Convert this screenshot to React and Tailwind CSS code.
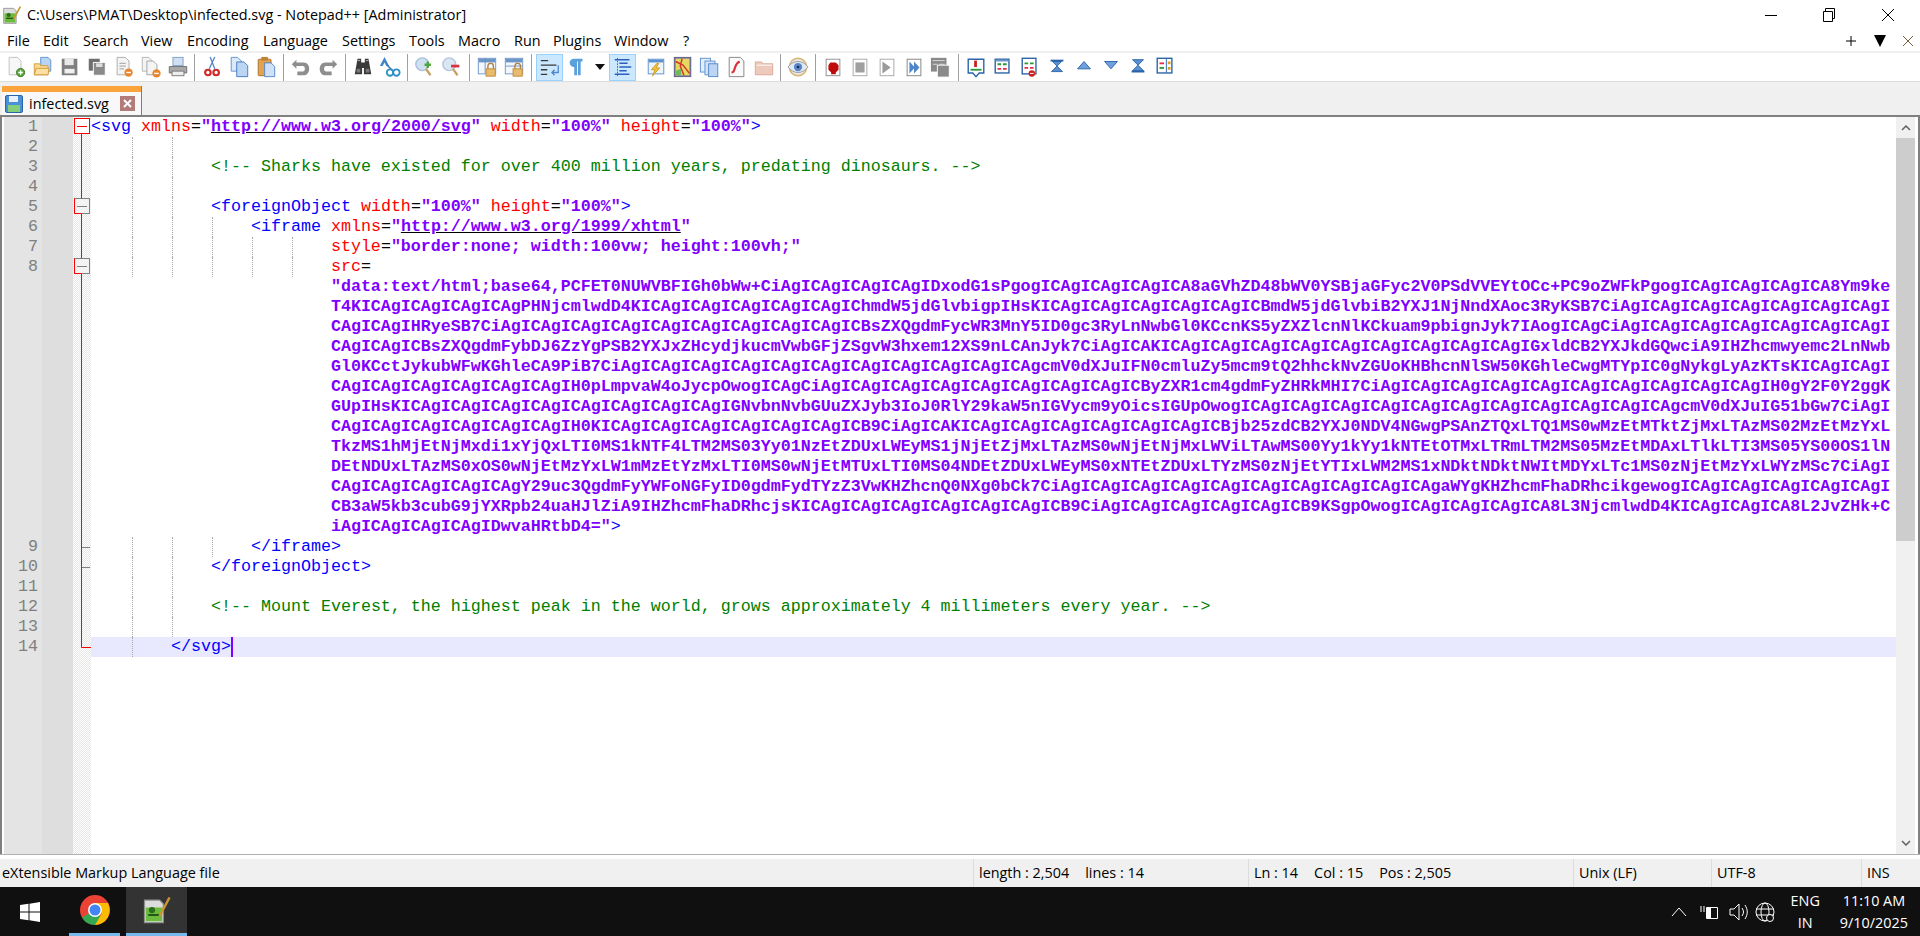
import React from "react";

const menus = [
  ["File", "w-[36px]"], ["Edit", "w-[40px]"], ["Search", "w-[58px]"], ["View", "w-[46px]"],
  ["Encoding", "w-[76px]"], ["Language", "w-[79px]"], ["Settings", "w-[67px]"], ["Tools", "w-[49px]"],
  ["Macro", "w-[56px]"], ["Run", "w-[39px]"], ["Plugins", "w-[61px]"], ["Window", "w-[69px]"], ["?", "w-[20px]"],
];

const b64 = [
  "T4KICAgICAgICAgICAgPHNjcmlwdD4KICAgICAgICAgICAgICAgIChmdW5jdGlvbigpIHsKICAgICAgICAgICAgICAgICBmdW5jdGlvbiB2YXJ1NjNndXAoc3RyKSB7CiAgICAgICAgICAgICAgICAgICAgI",
  "CAgICAgIHRyeSB7CiAgICAgICAgICAgICAgICAgICAgICAgICAgICBsZXQgdmFycWR3MnY5ID0gc3RyLnNwbGl0KCcnKS5yZXZlcnNlKCkuam9pbignJyk7IAogICAgCiAgICAgICAgICAgICAgICAgICAgI",
  "CAgICAgICBsZXQgdmFybDJ6ZzYgPSB2YXJxZHcydjkucmVwbGFjZSgvW3hxem12XS9nLCAnJyk7CiAgICAK" + "ICAg".repeat(9) + "IGxldCB2YXJkdGQwciA9IHZhcmwyemc2LnNwb",
  "Gl0KCctJykubWFwKGhleCA9PiB7CiAgICAgICAgICAgICAgICAgICAgICAgICAgICAgICAgcmV0dXJuIFN0cmluZy5mcm9tQ2hhckNvZGUoKHBhcnNlSW50KGhleCwgMTYpIC0gNykgLyAzKTsKICAgICAgI",
  "CAgICAgICAgICAgICAgICAgIH0pLmpvaW4oJycpOwogICAgCiAgICAgICAgICAgICAgICAgICAgICAgICByZXR1cm4gdmFyZHRkMHI7CiAgICAgICAgICAgICAgICAgICAgICAgICAgICAgIH0gY2F0Y2ggK",
  "GUpIHsKICAgICAgICAgICAgICAgICAgICAgICAgIGNvbnNvbGUuZXJyb3IoJ0RlY29kaW5nIGVycm9yOicsIGUpOwogICAgICAgICAgICAgICAgICAgICAgICAgICAgICAgICAgcmV0dXJuIG51bGw7CiAgI",
  "CAgICAgICAgICAgICAgICAgIH0KICAgICAgICAgICAgICAgICAgICB9CiAgICAKICAgICAgICAgICAgICAgICAgICBjb25zdCB2YXJ0NDV4NGwgPSAnZTQxLTQ1MS0wMzEtMTktZjMxLTAzMS02MzEtMzYxL",
  "TkzMS1hMjEtNjMxdi1xYjQxLTI0MS1kNTF4LTM2MS03Yy01NzEtZDUxLWEyMS1jNjEtZjMxLTAzMS0wNjEtNjMxLWViLTAwMS00Yy1kYy1kNTEtOTMxLTRmLTM2MS05MzEtMDAxLTlkLTI3MS05YS00OS1lN",
  "DEtNDUxLTAzMS0xOS0wNjEtMzYxLW1mMzEtYzMxLTI0MS0wNjEtMTUxLTI0MS04NDEtZDUxLWEyMS0xNTEtZDUxLTYzMS0zNjEtYTIxLWM2MS1xNDktNDktNWItMDYxLTc1MS0zNjEtMzYxLWYzMSc7CiAgI",
  "CAgICAgICAgICAgICAgY29uc3QgdmFyYWFoNGFyID0gdmFydTYzZ3VwKHZhcnQ0NXg0bCk7CiAgICAgICAgICAgICAgICAgICAgICAgICAgICAgaWYgKHZhcmFhaDRhcikgewogICAgICAgICAgICAgICAgI",
  "CB3aW5kb3cubG9jYXRpb24uaHJlZiA9IHZhcmFhaDRhcjsK" + "ICAg".repeat(6) + "ICB9Ci" + "AgIC".repeat(5) + "B9KSgpOwog" + "ICAg".repeat(3) + "ICA8L3NjcmlwdD4K" + "ICAg".repeat(2) + "ICA8L2JvZHk+C",
];

const T = ({ c }) => <span className="text-[#0000ff]">{c}</span>;
const A = ({ c }) => <span className="text-[#ff0000]">{c}</span>;
const S = ({ c }) => <span className="font-bold text-[#8000ff]">{c}</span>;
const U = ({ c }) => <span className="font-bold text-[#8000ff] underline decoration-black">{c}</span>;
const C = ({ c }) => <span className="text-[#008000]">{c}</span>;

const pad = (n) => " ".repeat(n);

const rows = [
  { n: 1, g: [], t: <><T c="<svg " /><A c="xmlns" />=<S c={'"'} /><U c="http://www.w3.org/2000/svg" /><S c={'"'} /> <A c="width" />=<S c={'"100%"'} /> <A c="height" />=<S c={'"100%"'} /><T c=">" /></> },
  { n: 2, g: [41, 81], t: "" },
  { n: 3, g: [41, 81], t: <>{pad(12)}<C c="<!-- Sharks have existed for over 400 million years, predating dinosaurs. -->" /></> },
  { n: 4, g: [41, 81], t: "" },
  { n: 5, g: [41, 81], t: <>{pad(12)}<T c="<foreignObject " /><A c="width" />=<S c={'"100%"'} /> <A c="height" />=<S c={'"100%"'} /><T c=">" /></> },
  { n: 6, g: [41, 81, 121], t: <>{pad(16)}<T c="<iframe " /><A c="xmlns" />=<S c={'"'} /><U c="http://www.w3.org/1999/xhtml" /><S c={'"'} /></> },
  { n: 7, g: [41, 81, 121, 161, 201], t: <>{pad(24)}<A c="style" />=<S c={'"border:none; width:100vw; height:100vh;"'} /></> },
  { n: 8, g: [41, 81, 121, 161, 201], t: <>{pad(24)}<A c="src" />=</> },
  { g: [], t: <>{pad(24)}<S c={'"data:text/html;base64,PCFET0NUWVBFIGh0bWw+CiAgICAgICAgICAgIDxodG1sPgogICAgICAgICAgICA8aGVhZD48bWV0YSBjaGFyc2V0PSdVVEYtOCc+PC9oZWFkPgogICAgICAgICAgICA8Ym9ke'} /></> },
  ...b64.map((s) => ({ g: [], t: <>{pad(24)}<S c={s} /></> })),
  { g: [], t: <>{pad(24)}<S c={'iAgICAgICAgICAgIDwvaHRtbD4="'} /><T c=">" /></> },
  { n: 9, g: [41, 81, 121], t: <>{pad(16)}<T c="</iframe>" /></> },
  { n: 10, g: [41, 81], t: <>{pad(12)}<T c="</foreignObject>" /></> },
  { n: 11, g: [41, 81], t: "" },
  { n: 12, g: [41, 81], t: <>{pad(12)}<C c="<!-- Mount Everest, the highest peak in the world, grows approximately 4 millimeters every year. -->" /></> },
  { n: 13, g: [41, 81], t: "" },
  { n: 14, g: [41], t: <>{pad(8)}<T c="</svg>" /></>, active: true },
];

/* toolbar drawings */
const Ico = ({ children }) => (
  <svg width="22" height="22" viewBox="0 0 24 24" className="block">{children}</svg>
);
const Page = ({ x = 5, y = 2, w = 12, h = 17, f = "#fff", s = "#9a9a9a" }) => (
  <path d={`M${x}.5 ${y}.5h${w - 4}l4 4v${h - 4}h-${w}z`} fill={f} stroke={s} />
);
const Win = ({ c = "#5b8fd0" }) => (
  <>
    <rect x="3.5" y="3.5" width="17" height="16" fill="#eef4fb" stroke={c} />
    <rect x="4" y="4" width="16" height="3" fill={c} />
  </>
);

const icons = {
  newf: <Ico><Page x={4} y={1} w={13} h={19} f="#f7f7f7" s="#c0c0c0" /><circle cx="17" cy="18" r="4.5" fill="#5aa63a" stroke="#3b7d25" /><path d="M17 15.5v5M14.5 18h5" stroke="#fff" strokeWidth="1.5" /></Ico>,
  open: <Ico><path d="M9.5 1.5h8l3 3v12h-11z" fill="#b9d3f3" stroke="#5b8fd0" /><path d="M2.5 8.5h6l1 2h8v10h-15z" fill="#fbd98c" stroke="#cf9b3c" /><path d="M2.5 20.5l2-7h14l-1 7z" fill="#fce0a0" stroke="#cf9b3c" /></Ico>,
  save: <Ico><rect x="3" y="3" width="17" height="18" fill="#7f7f7f" /><rect x="6" y="3" width="10" height="7" fill="#e8e8e8" /><rect x="6" y="14" width="11" height="5" fill="#f0f0f0" /></Ico>,
  saveall: <Ico><rect x="3" y="3" width="12" height="13" fill="#6f6f6f" /><rect x="8" y="7" width="13" height="14" fill="#8a8a8a" stroke="#fff" /><rect x="11" y="8" width="7" height="4" fill="#ddd" /></Ico>,
  close: <Ico><Page x={4} y={1} w={13} h={19} f="#f4f4f4" s="#a8a8a8" /><path d="M7 8h7M7 11h7M7 14h5" stroke="#9a9a9a" /><circle cx="17" cy="18" r="4.5" fill="#e8862d" /><path d="M14.5 18h5" stroke="#fff" strokeWidth="1.5" /></Ico>,
  closeall: <Ico><Page x={2} y={1} w={11} h={15} f="#f4f4f4" s="#b0b0b0" /><Page x={7} y={5} w={11} h={15} f="#f4f4f4" s="#a0a0a0" /><circle cx="18" cy="19" r="4.5" fill="#e8862d" /><path d="M15.5 19h5" stroke="#fff" strokeWidth="1.5" /></Ico>,
  print: <Ico><rect x="6.5" y="1.5" width="11" height="9" fill="#cfe0f5" stroke="#7c9cc6" /><path d="M2.5 11.5h19v7h-19z" fill="#a9a9a9" stroke="#6f6f6f" /><rect x="5.5" y="16.5" width="13" height="5" fill="#eee" stroke="#777" /></Ico>,
  cut: <Ico><path d="M9 14L15 1M15 14L10 1" stroke="#4f86c9" strokeWidth="1.4" /><circle cx="7.5" cy="18" r="3" fill="none" stroke="#d02a2a" strokeWidth="2.4" /><circle cx="16.5" cy="18" r="3" fill="none" stroke="#d02a2a" strokeWidth="2.4" /></Ico>,
  copy: <Ico><Page x={3} y={1} w={11} h={15} f="#dce9f9" s="#5b8fd0" /><Page x={9} y={6} w={12} h={16} f="#bcd5f3" s="#3f78c4" /></Ico>,
  paste: <Ico><rect x="3.5" y="3.5" width="14" height="18" rx="1" fill="#e3a24f" stroke="#a86f25" /><rect x="7" y="1" width="7" height="4" fill="#bd8236" /><Page x={10} y={7} w={11} h={15} f="#cfe0f7" s="#4f86c9" /></Ico>,
  undo: <Ico><path d="M7 4L2 9l5 5v-3h7c3 0 3 6 0 6H8v4h7c8 0 8-14 0-14H7z" fill="#8e8e8e" /></Ico>,
  redo: <Ico><path d="M17 4l5 5-5 5v-3h-7c-3 0-3 6 0 6h6v4H9c-8 0-8-14 0-14h8z" fill="#8e8e8e" /></Ico>,
  find: <Ico><path d="M6 3h4v4h4V3h4l3 17h-8v-7h-2v7H3z" fill="#3a3a3a" /><path d="M6 5h3M15 5h3" stroke="#bbb" /><rect x="5" y="14" width="4" height="4" fill="#777" /><rect x="15" y="14" width="4" height="4" fill="#777" /></Ico>,
  replace: <Ico><path d="M6 1L1 11h3l2-4 2 4h3z" fill="#3f86c9" /><path d="M9 10l6 6" stroke="#3a6ea8" strokeWidth="1.5" /><circle cx="12" cy="18" r="3.5" fill="none" stroke="#2d8fc4" strokeWidth="2" /><circle cx="19" cy="18" r="3.5" fill="none" stroke="#2d8fc4" strokeWidth="2" /></Ico>,
  zoomin: <Ico><circle cx="9" cy="9" r="7" fill="#cfe0f3" stroke="#a9c0dc" strokeWidth="1.5" /><path d="M13 14l5 7" stroke="#c9a060" strokeWidth="2.5" /><path d="M15 6v7M11.500 9.500h7" stroke="#4ea63e" strokeWidth="2.600" /></Ico>,
  zoomout: <Ico><circle cx="9" cy="9" r="7" fill="#dbe6f3" stroke="#b2c5dc" strokeWidth="1.5" /><path d="M13 14l5 7" stroke="#c9a060" strokeWidth="2.5" /><path d="M11 11h9" stroke="#d8343b" strokeWidth="3" /></Ico>,
  syncv: <Ico><rect x="2.5" y="2.5" width="19" height="17" fill="#f3f6fb" stroke="#6c95c8" /><rect x="3" y="3" width="18" height="4" fill="#6c95c8" /><path d="M10 2v17" stroke="#6c95c8" /><rect x="11" y="14" width="10" height="8" fill="#e9bb6d" stroke="#c08a35" /><path d="M13 14v-3a3 3 0 016 0v3" fill="none" stroke="#b08040" strokeWidth="1.5" /></Ico>,
  synch: <Ico><rect x="2.5" y="2.5" width="19" height="17" fill="#f3f6fb" stroke="#6c95c8" /><rect x="3" y="3" width="18" height="4" fill="#6c95c8" /><path d="M3 11h18" stroke="#6c95c8" /><rect x="11" y="14" width="10" height="8" fill="#e9bb6d" stroke="#c08a35" /><path d="M13 14v-3a3 3 0 016 0v3" fill="none" stroke="#b08040" strokeWidth="1.5" /></Ico>,
  wrap: <Ico><path d="M2 5h8M2 10h17M2 15h7M2 20h7" stroke="#3a3a3a" strokeWidth="1.4" /><path d="M21 10v8h-6M17 15l-3 3 3 3" fill="none" stroke="#4f86c9" strokeWidth="1.4" /></Ico>,
  pilcrow: <Ico><path d="M8 3h10v3h-2v15h-3V6h-1v15H9v-9a4.500 4.500 0 01-1-9z" fill="#5aa0dc" /></Ico>,
  drop: <svg width="12" height="24" viewBox="0 0 12 24" className="block"><path d="M1 9h10l-5 6z" fill="#111" /></svg>,
  indent: <Ico><path d="M6 2v20" stroke="#e03030" strokeDasharray="2 1" /><path d="M3 4h16M8 8h9M8 12h13M8 16h8M3 20h16" stroke="#2a5fc0" strokeWidth="1.6" /></Ico>,
  flash: <Ico><Win /><path d="M13 8l-6 7h4l-3 7 8-9h-4l3-5z" fill="#f2c23c" stroke="#d19a1c" /></Ico>,
  map: <Ico><rect x="2.500" y="1.500" width="18" height="21" fill="#7f7fa8" stroke="#5a5a7e" /><rect x="4" y="3" width="15" height="18" fill="#e5d95f" /><path d="M4 6l8 4 7 9M11 3l-2 8 4 10" stroke="#d4342f" strokeWidth="1.6" fill="none" /><path d="M4 16l6-2v7H4z" fill="#6fb85c" /></Ico>,
  list: <Ico><rect x="1.500" y="2.500" width="11" height="15" fill="#e4eefb" stroke="#5b8fd0" /><rect x="6.500" y="5.500" width="11" height="15" fill="#d4e4f8" stroke="#5b8fd0" /><rect x="10.500" y="8.500" width="10" height="14" fill="#bcd5f3" stroke="#4f86c9" /></Ico>,
  func: <Ico><Page x={3} y={1} w={16} h={21} f="#fafafa" s="#808080" /><path d="M6 18c3 0 3-3 4-6s2-5 5-6" fill="none" stroke="#d8343b" strokeWidth="2.4" /></Ico>,
  folder: <Ico><path d="M2.500 6.500h7l1 2h11v12h-19z" fill="#eecabd" stroke="#d9a796" /><path d="M4 10h17" stroke="#fff" /></Ico>,
  eye: <Ico><circle cx="12" cy="12" r="9.500" fill="#e6e6e6" stroke="#d9b26c" strokeWidth="1.500" /><path d="M1 12c6-8 16-8 22 0-6 8-16 8-22 0z" fill="#dfe8f5" stroke="#9a9a9a" /><circle cx="12" cy="12" r="4.500" fill="#5a86c4" /><circle cx="12" cy="12" r="1.500" fill="#17315c" /></Ico>,
  rec: <Ico><rect x="4.500" y="3.500" width="15" height="18" fill="#fff" stroke="#8a8a8a" /><path d="M9 7h6l3 3v5l-3 3v2h-5v-2l-3-3v-5z" fill="#bf0b0b" /></Ico>,
  stop: <Ico><rect x="4.500" y="3.500" width="15" height="18" fill="#fff" stroke="#a5a5a5" /><rect x="7" y="7" width="10" height="11" fill="#a0a0a0" /></Ico>,
  play: <Ico><rect x="4.500" y="3.500" width="15" height="18" fill="#fff" stroke="#a5a5a5" /><path d="M7 6l9 6.500L7 19z" fill="#9a9a9a" /></Ico>,
  multi: <Ico><rect x="4.500" y="3.500" width="15" height="18" fill="#fff" stroke="#7f7f7f" /><path d="M7 6l6 6.500-6 6.500zM12 6l6 6.500-6 6.500z" fill="#4f86c9" /></Ico>,
  savemac: <Ico><rect x="1" y="2" width="17" height="15" fill="#8a8a8a" /><path d="M3 5h13M3 9h5M10 9h6" stroke="#ddd" /><rect x="8" y="10" width="13" height="13" fill="#8a8a8a" stroke="#fff" /></Ico>,
  mark1: <Ico><path d="M3.500 3.500h17v15h-5l-3.500 4-3.500-4h-5z" fill="#fff" stroke="#2a63a8" strokeWidth="1.500" /><rect x="10" y="5" width="3" height="7" fill="#cc2020" /><path d="M6 15h12" stroke="#2a9a3a" strokeWidth="2" /></Ico>,
  mark2: <Ico><rect x="3.500" y="3.500" width="15" height="15" fill="#fff" stroke="#2a63a8" strokeWidth="1.500" /><rect x="4" y="4" width="14" height="2" fill="#6c95c8" /><path d="M6 9h4M12 9h4" stroke="#2a9a3a" strokeWidth="2" /><path d="M6 14h4M12 14h4" stroke="#e0304a" strokeWidth="2" /></Ico>,
  mark3: <Ico><rect x="3.500" y="2.500" width="15" height="17" fill="#fff" stroke="#2a63a8" strokeWidth="1.500" /><path d="M6 8h4M12 8h4" stroke="#2a9a3a" strokeWidth="2" /><path d="M6 13h4M12 13h4" stroke="#e0304a" strokeWidth="2" /><circle cx="14" cy="19" r="3.500" fill="#cc2020" /><path d="M12 19h4" stroke="#fff" /></Ico>,
  upfirst: <Ico><path d="M5 4h14v2H5z" fill="#2a63a8" /><path d="M7 6h10l-5 5zM12 11l6 6H6z" fill="#5b8fd0" stroke="#2a63a8" /></Ico>,
  up: <Ico><path d="M12 6l7 8H5z" fill="#6f9fdc" stroke="#2a63a8" /></Ico>,
  down: <Ico><path d="M12 14l7-8H5z" fill="#6f9fdc" stroke="#2a63a8" /></Ico>,
  lastdown: <Ico><path d="M6 4h12l-6 6zM12 10l6 6H6z" fill="#5b8fd0" stroke="#2a63a8" /><path d="M5 16h14v2H5z" fill="#2a63a8" /></Ico>,
  markside: <Ico><rect x="3.500" y="2.500" width="16" height="16" fill="#fff" stroke="#2a63a8" strokeWidth="1.500" /><path d="M13.500 3v15" stroke="#2a63a8" /><path d="M6 8h5" stroke="#e0304a" strokeWidth="2" /><path d="M6 13h5" stroke="#2a9a3a" strokeWidth="2" /><rect x="15" y="6" width="3" height="3" fill="#e0a020" /><rect x="15" y="12" width="3" height="3" fill="#e0a020" /></Ico>,
};

const Sep = ({ w = "w-[8px]" }) => (
  <div className={`flex h-[27px] shrink-0 justify-center ${w}`}>
    <div className="h-[27px] w-px bg-[#a0a0a0]" />
  </div>
);

const Btn = ({ i, on }) => (
  <div className={`flex h-[27px] w-[27px] shrink-0 items-center justify-center ${on ? "border border-[#99d1ff] bg-[#cce8ff]" : ""}`}>
    {icons[i]}
  </div>
);

function Toolbar() {
  return (
    <div className="flex h-[28px] items-center bg-white pl-[2px]">
      {["newf", "open", "save", "saveall", "close", "closeall", "print"].map((i) => <Btn key={i} i={i} />)}
      <Sep w="w-[7px]" />
      {["cut", "copy", "paste"].map((i) => <Btn key={i} i={i} />)}
      <Sep />
      {["undo", "redo"].map((i) => <Btn key={i} i={i} />)}
      <Sep />
      {["find", "replace"].map((i) => <Btn key={i} i={i} />)}
      <Sep />
      {["zoomin", "zoomout"].map((i) => <Btn key={i} i={i} />)}
      <Sep />
      {["syncv", "synch"].map((i) => <Btn key={i} i={i} />)}
      <Sep />
      <div className="w-px" />
      <Btn i="wrap" on />
      <Btn i="pilcrow" />
      <div className="flex w-[19px] shrink-0 justify-center">{icons.drop}</div>
      <Btn i="indent" on />
      <div className="w-[6px] shrink-0" />
      {["flash", "map", "list", "func", "folder"].map((i) => <Btn key={i} i={i} />)}
      <Sep w="w-[7px]" />
      <Btn i="eye" />
      <Sep />
      {["rec", "stop", "play", "multi", "savemac"].map((i) => <Btn key={i} i={i} />)}
      <Sep />
      {["mark1", "mark2", "mark3", "upfirst", "up", "down", "lastdown", "markside"].map((i) => <Btn key={i} i={i} />)}
    </div>
  );
}

function FoldMarks() {
  return (
    <svg width="18" height="540" viewBox="0 0 18 540" className="absolute left-0 top-0">
      <path d="M8.500 17V530.500H18" fill="none" stroke="#ff0000" />
      <rect x="1.500" y="1.500" width="15" height="15" fill="#fff" stroke="#ff0000" />
      <path d="M4 9.500h10" stroke="#ff0000" />
      <rect x="1.500" y="81.500" width="15" height="15" fill="#f3f3f3" stroke="#808080" />
      <path d="M1.500 81.500v15h7" fill="none" stroke="#ff0000" />
      <path d="M4 89.500h10" stroke="#808080" />
      <rect x="1.500" y="141.500" width="15" height="15" fill="#f3f3f3" stroke="#808080" />
      <path d="M1.500 141.500v15h7" fill="none" stroke="#ff0000" />
      <path d="M4 149.500h10" stroke="#808080" />
      <path d="M9 430.500h8M9 450.500h8" stroke="#808080" />
    </svg>
  );
}

function Editor() {
  return (
    <div className="flex h-[739px] border-l-[2px] border-r-[2px] border-t-[2px] border-[#808080] bg-white pl-[2px] font-['Liberation_Mono',monospace] text-[16.67px]">
      <div className="w-[38px] shrink-0 bg-[#e4e4e4] text-right text-[#808080]">
        {rows.map((r, idx) => (
          <div key={idx} className="h-5 pr-[4px] leading-5">{r.n || ""}</div>
        ))}
      </div>
      <div className="w-[31px] shrink-0 bg-[#dedede]" />
      <div className="relative w-[18px] shrink-0 bg-[repeating-conic-gradient(#e6e6e6_0_25%,#ffffff_0_50%)] bg-[length:2px_2px]">
        <FoldMarks />
      </div>
      <div className="min-w-0 flex-1 overflow-hidden bg-white text-black">
        {rows.map((r, idx) => (
          <div key={idx} className={`relative h-5 whitespace-pre leading-5 ${r.active ? "bg-[#e8e8ff]" : ""}`}>
            {r.g.map((x) => (
              <span key={x} className="absolute top-0 h-5 border-l border-dotted border-[#a8a8a8]" style={{ left: x }} />
            ))}
            <span className="relative">{r.t}</span>
            {r.active && <span className="absolute left-[140px] top-0 h-5 w-[2px] bg-[#8000ff]" />}
          </div>
        ))}
      </div>
      <div className="mr-[3px] flex w-[19px] shrink-0 flex-col bg-[#f0f0f0]">
        <div className="flex h-[21px] items-center justify-center">
          <svg width="10" height="6" viewBox="0 0 10 6"><path d="M1 5l4-4 4 4" fill="none" stroke="#606060" strokeWidth="1.500" /></svg>
        </div>
        <div className="h-[403px] bg-[#cdcdcd]" />
        <div className="flex-1" />
        <div className="flex h-[22px] items-center justify-center">
          <svg width="10" height="6" viewBox="0 0 10 6"><path d="M1 1l4 4 4-4" fill="none" stroke="#606060" strokeWidth="1.500" /></svg>
        </div>
      </div>
    </div>
  );
}

const statusCells = [
  ["w-[275px]", <>length : 2,504<span className="inline-block w-[16px]" />lines : 14</>],
  ["w-[325px]", <>Ln : 14<span className="inline-block w-[16px]" />Col : 15<span className="inline-block w-[16px]" />Pos : 2,505</>],
  ["w-[138px]", "Unix (LF)"],
  ["w-[150px]", "UTF-8"],
  ["w-[39px]", "INS"],
];

function NppLogo({ size = 24 }) {
  return (
    <svg width={size} height={size} viewBox="0 0 24 24" className="block">
      <path d="M2 4h12l3 3v15H2z" fill="#dcdcdc" stroke="#8f8f8f" />
      <rect x="3" y="10" width="13" height="11" fill="#6dbb3c" />
      <circle cx="8" cy="12" r="2.500" fill="#2f6b1f" />
      <path d="M5 16h9" stroke="#1f4f16" strokeWidth="1.500" />
      <path d="M14 17L22 2" stroke="#c8962f" strokeWidth="2" />
    </svg>
  );
}

export default function App() {
  return (
    <div className="flex h-[936px] w-[1920px] flex-col overflow-hidden bg-white font-['Open_Sans',sans-serif] text-[14.4px] text-black">
      {/* title bar */}
      <div className="flex h-[30px] items-center">
        <div className="ml-[2px] w-[25px]"><NppLogo size={20} /></div>
        <div>C:\Users\PMAT\Desktop\infected.svg - Notepad++ [Administrator]</div>
        <div className="ml-auto flex items-center">
          <svg width="14" height="14" viewBox="0 0 14 14" className="mr-[44px]"><path d="M1 7.500h12" stroke="#000" /></svg>
          <svg width="14" height="14" viewBox="0 0 14 14" className="mr-[45px]"><path d="M1.500 3.500h9v10h-9zM3.500 3.500v-3h9v10h-2" fill="none" stroke="#000" /></svg>
          <svg width="14" height="14" viewBox="0 0 14 14" className="mr-[25px]"><path d="M1 1l12 12M13 1L1 13" stroke="#000" /></svg>
        </div>
      </div>
      {/* menu */}
      <div className="flex h-[23px] items-center border-b-[2px] border-[#f0f0f0] pl-[7px]">
        {menus.map(([m, w]) => <div key={m} className={w}>{m}</div>)}
        <div className="ml-auto flex items-center">
          <svg width="12" height="12" viewBox="0 0 12 12" className="mr-[17px]"><path d="M6 1v10M1 6h10" stroke="#000" /></svg>
          <svg width="12" height="12" viewBox="0 0 12 12" className="mr-[16px]"><path d="M0 0h12L6 12z" fill="#000" /></svg>
          <svg width="12" height="12" viewBox="0 0 12 12" className="mr-[6px]"><path d="M1 1l10 10M11 1L1 11" stroke="#7a5a3a" /></svg>
        </div>
      </div>
      <Toolbar />
      <div className="h-px bg-[#dcdcdc]" />
      {/* tab bar */}
      <div className="flex h-[33px] items-end bg-[#f0f0f0] pl-[2px]">
        <div className="flex h-[29px] w-[140px] flex-col border-r border-[#808080] bg-[#f8f8f8]">
          <div className="h-[6px] bg-[#fba43c]" />
          <div className="flex flex-1 items-center pl-[3px]">
            <svg width="18" height="20" viewBox="0 0 18 20" className="mr-[6px]">
              <rect x="0.500" y="1.500" width="17" height="17" rx="1.500" fill="#4a8fd8" stroke="#2a63a8" />
              <rect x="4" y="2" width="9" height="6" fill="#e8f1fb" />
              <rect x="3" y="11" width="12" height="7" fill="#86cf7a" />
            </svg>
            <span>infected.svg</span>
            <div className="ml-auto mr-[6px] flex h-[15px] w-[15px] items-center justify-center bg-[#b57b7b]">
              <svg width="9" height="9" viewBox="0 0 9 9"><path d="M1 1l7 7M8 1L1 8" stroke="#fff" strokeWidth="2" /></svg>
            </div>
          </div>
        </div>
      </div>
      <Editor />
      <div className="h-[5px] border-t border-[#b0b0b0] bg-white" />
      {/* status bar */}
      <div className="flex h-[28px] items-center bg-[#f0f0f0] pl-[2px]">
        <div className="w-[971px]">eXtensible Markup Language file</div>
        {statusCells.map(([w, c], i) => (
          <div key={i} className={`flex h-full items-center border-l border-[#dcdcdc] pl-[5px] ${w}`}>{c}</div>
        ))}
      </div>
      {/* taskbar */}
      <div className="flex flex-1 items-stretch bg-[#101010] text-white">
        <div className="flex w-[69px] items-center justify-center pr-[9px]">
          <svg width="20" height="20" viewBox="0 0 20 20"><path d="M0 3l8.500-1.200V9.500H0zM9.500 1.700L20 0v9.500H9.500zM0 10.500h8.500v7.700L0 17zM9.500 10.500H20V20L9.500 18.300z" fill="#fff" /></svg>
        </div>
        <div className="flex w-[51px] items-center justify-center border-b-[3px] border-[#76b9ed]">
          <svg width="30" height="30" viewBox="0 0 30 30">
            <circle cx="15" cy="15" r="15" fill="#ea4335" />
            <path d="M15 15L2 22.500A15 15 0 0015 30l7.500-6z" fill="#34a853" />
            <path d="M15 8h13a15 15 0 01-13 22l7-12z" fill="#fbbc05" />
            <circle cx="15" cy="15" r="7" fill="#fff" />
            <circle cx="15" cy="15" r="5.500" fill="#4285f4" />
          </svg>
        </div>
        <div className="ml-[6px] flex w-[61px] items-center justify-center border-b-[3px] border-[#76b9ed] bg-[#333333]">
          <NppLogo size={30} />
        </div>
        <div className="ml-auto flex items-center">
          <svg width="16" height="10" viewBox="0 0 16 10" className="mr-[13px]"><path d="M1 9l7-8 7 8" fill="none" stroke="#fff" /></svg>
          <svg width="19" height="18" viewBox="0 0 19 18" className="mr-[10px]"><path d="M1 3v6M4 3v6M6.500 4.500h11v11h-11z" fill="none" stroke="#fff" /><rect x="7" y="5" width="4" height="10" fill="#fff" /></svg>
          <svg width="20" height="22" viewBox="0 0 20 22" className="mr-[6px]"><path d="M1 8h4l5-5v16l-5-5H1zM13 7c2 3 2 5 0 8M16 4c3 5 3 9 0 14" fill="none" stroke="#fff" /></svg>
          <svg width="20" height="22" viewBox="0 0 20 22" className="mr-[16px]"><circle cx="10" cy="11" r="9" fill="none" stroke="#fff" /><ellipse cx="10" cy="11" rx="4" ry="9" fill="none" stroke="#fff" /><path d="M1 8h18M1 14h18" stroke="#fff" /><circle cx="15" cy="17" r="3.500" fill="#101010" stroke="#fff" /></svg>
          <div className="mr-[20px] flex flex-col items-center gap-[2px] leading-[20px]"><span>ENG</span><span>IN</span></div>
          <div className="mr-[12px] flex flex-col items-center gap-[2px] leading-[20px]"><span>11:10 AM</span><span>9/10/2025</span></div>
        </div>
      </div>
    </div>
  );
}
